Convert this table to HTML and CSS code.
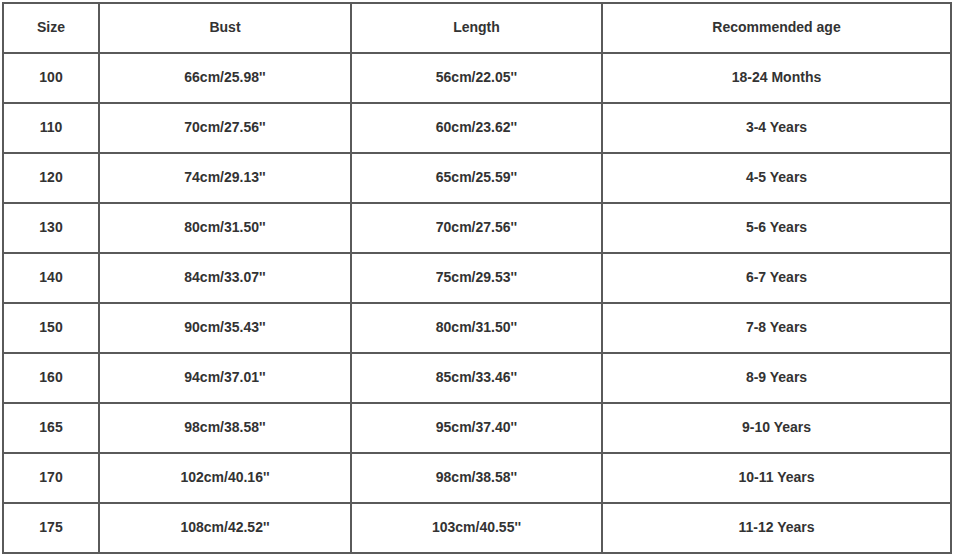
FILE: index.html
```html
<!DOCTYPE html>
<html>
<head>
<meta charset="utf-8">
<link rel="stylesheet" href="styles.css">
</head>
<body>
<table class="size-table">
  <colgroup>
    <col class="c1"><col class="c2"><col class="c3"><col class="c4">
  </colgroup>
  <tr><td>Size</td><td>Bust</td><td>Length</td><td>Recommended age</td></tr>
  <tr><td>100</td><td>66cm/25.98''</td><td>56cm/22.05''</td><td>18-24 Months</td></tr>
  <tr><td>110</td><td>70cm/27.56''</td><td>60cm/23.62''</td><td>3-4 Years</td></tr>
  <tr><td>120</td><td>74cm/29.13''</td><td>65cm/25.59''</td><td>4-5 Years</td></tr>
  <tr><td>130</td><td>80cm/31.50''</td><td>70cm/27.56''</td><td>5-6 Years</td></tr>
  <tr><td>140</td><td>84cm/33.07''</td><td>75cm/29.53''</td><td>6-7 Years</td></tr>
  <tr><td>150</td><td>90cm/35.43''</td><td>80cm/31.50''</td><td>7-8 Years</td></tr>
  <tr><td>160</td><td>94cm/37.01''</td><td>85cm/33.46''</td><td>8-9 Years</td></tr>
  <tr><td>165</td><td>98cm/38.58''</td><td>95cm/37.40''</td><td>9-10 Years</td></tr>
  <tr><td>170</td><td>102cm/40.16''</td><td>98cm/38.58''</td><td>10-11 Years</td></tr>
  <tr><td>175</td><td>108cm/42.52''</td><td>103cm/40.55''</td><td>11-12 Years</td></tr>
</table>
</body>
</html>
```
FILE: styles.css
```css
html, body {
  margin: 0;
  padding: 0;
  background: #ffffff;
}
body {
  padding: 2px 0 0 2px;
  font-family: "Liberation Sans", Arial, sans-serif;
}
.size-table {
  border-collapse: collapse;
  table-layout: fixed;
  width: 948px;
}
.c1 { width: 96px; }
.c2 { width: 252px; }
.c3 { width: 251px; }
.c4 { width: 349px; }
.size-table td {
  border: 2px solid #5a5a5a;
  height: 46px;
  padding: 0 0 2px 0;
  text-align: center;
  vertical-align: middle;
  font-size: 14px;
  font-weight: bold;
  color: #333333;
}
```
